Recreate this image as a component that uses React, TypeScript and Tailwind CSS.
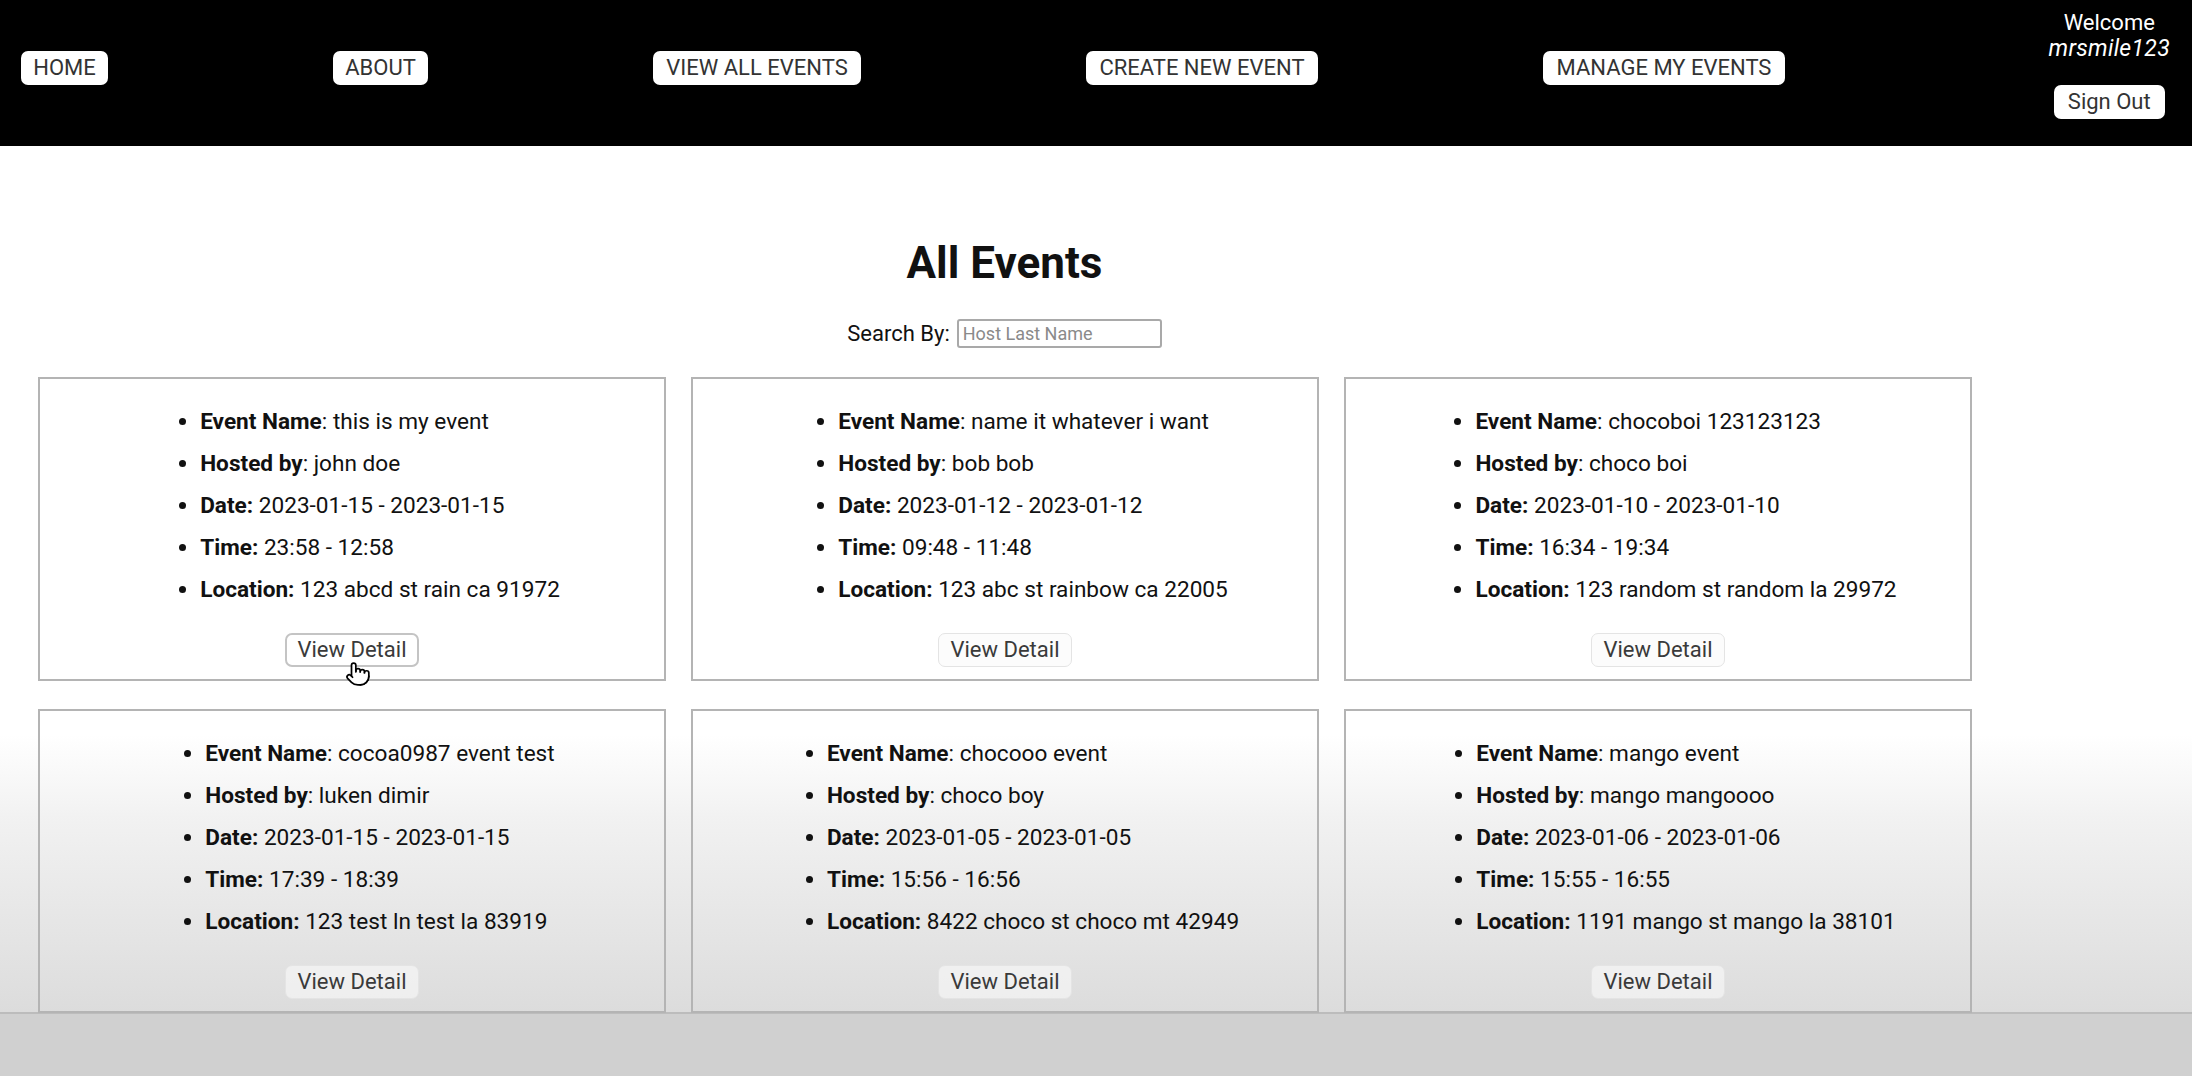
import { Pointer } from "lucide-react";

const NAV = [
  { label: "HOME", w: "w-[87px]" },
  { label: "ABOUT", w: "w-[95px]" },
  { label: "VIEW ALL EVENTS", w: "w-[208px]" },
  { label: "CREATE NEW EVENT", w: "w-[232px]" },
  { label: "MANAGE MY EVENTS", w: "w-[242px]" },
];

const EVENTS = [
  {
    name: "this is my event",
    host: "john doe",
    date: "2023-01-15 - 2023-01-15",
    time: "23:58 - 12:58",
    location: "123 abcd st rain ca 91972",
  },
  {
    name: "name it whatever i want",
    host: "bob bob",
    date: "2023-01-12 - 2023-01-12",
    time: "09:48 - 11:48",
    location: "123 abc st rainbow ca 22005",
  },
  {
    name: "chocoboi 123123123",
    host: "choco boi",
    date: "2023-01-10 - 2023-01-10",
    time: "16:34 - 19:34",
    location: "123 random st random la 29972",
  },
  {
    name: "cocoa0987 event test",
    host: "luken dimir",
    date: "2023-01-15 - 2023-01-15",
    time: "17:39 - 18:39",
    location: "123 test ln test la 83919",
  },
  {
    name: "chocooo event",
    host: "choco boy",
    date: "2023-01-05 - 2023-01-05",
    time: "15:56 - 16:56",
    location: "8422 choco st choco mt 42949",
  },
  {
    name: "mango event",
    host: "mango mangoooo",
    date: "2023-01-06 - 2023-01-06",
    time: "15:55 - 16:55",
    location: "1191 mango st mango la 38101",
  },
];

export default function App() {
  return (
    <div className="min-h-screen bg-[#d0d0d0] font-['Roboto',sans-serif] text-[#111]">
      {/* Nav */}
      <nav className="h-[146px] bg-black flex pl-[21px] pr-[22px]">
        <div className="flex items-center gap-[225px] pb-[10px]">
          {NAV.map((n) => (
            <button
              key={n.label}
              className={`${n.w} h-[34px] bg-white rounded-[7px] text-[22px] leading-none text-[#333] text-center`}
            >
              {n.label}
            </button>
          ))}
        </div>
        <div className="ml-auto flex flex-col items-center pt-[10px] text-white text-[22px] leading-[26px]">
          <span>Welcome</span>
          <span className="italic text-[23px] tracking-[0.3px]">mrsmile123</span>
          <button className="mt-[23px] w-[111px] h-[34px] bg-white rounded-[7px] text-[#333] text-[22px] leading-none">
            Sign Out
          </button>
        </div>
      </nav>

      {/* Content */}
      <main className="h-[866px] bg-[linear-gradient(to_bottom,#ffffff_0%,#ffffff_68%,#f1f1f1_78%,#dcdcdc_100%)]">
        <div className="ml-[38px] w-[1933px] flex flex-col items-center">
          <h1 className="mt-[91px] text-[44px] leading-[52px] font-bold">All Events</h1>
          <div className="mt-[30px] flex items-center gap-[7px]">
            <span className="text-[22px] leading-none">Search By:</span>
            <input
              placeholder="Host Last Name"
              className="w-[205px] h-[29px] border-2 border-[#a9a9a9] rounded-[3px] bg-white px-[4px] text-[18px] placeholder:text-[#8a8a8a] outline-none"
            />
          </div>
          <div className="mt-[29px] w-full grid grid-cols-[628px_628px_628px] gap-x-[25px] gap-y-[28px]">
            {EVENTS.map((e, i) => (
              <div
                key={e.name}
                className="h-[304px] border-2 border-[#b4b4b4] flex flex-col items-center pt-[30px]"
              >
                <ul className="list-disc pl-[56px] text-left text-[22.6px] leading-[26px] space-y-4">
                  <li>
                    <b>Event Name</b>: {e.name}
                  </li>
                  <li>
                    <b>Hosted by</b>: {e.host}
                  </li>
                  <li>
                    <b>Date:</b> {e.date}
                  </li>
                  <li>
                    <b>Time:</b> {e.time}
                  </li>
                  <li>
                    <b>Location:</b> {e.location}
                  </li>
                </ul>
                <button
                  className={`relative mt-[30px] w-[134px] h-[34px] rounded-[7px] text-[22px] leading-none text-[#3a3a3a] ${
                    i === 0
                      ? "bg-white border-2 border-[#c4c4c4]"
                      : "bg-[#fafafa]/60 border border-[#e4e4e4]"
                  }`}
                >
                  View Detail
                  {i === 0 && (
                    <Pointer
                      className="absolute left-[58px] top-[26px] size-[26px] text-black"
                      fill="white"
                      strokeWidth={1.6}
                    />
                  )}
                </button>
              </div>
            ))}
          </div>
        </div>
      </main>

      {/* Bottom band */}
      <div className="h-[64px] bg-[#d0d0d0] border-t-2 border-[#bcbcbc]" />
    </div>
  );
}
